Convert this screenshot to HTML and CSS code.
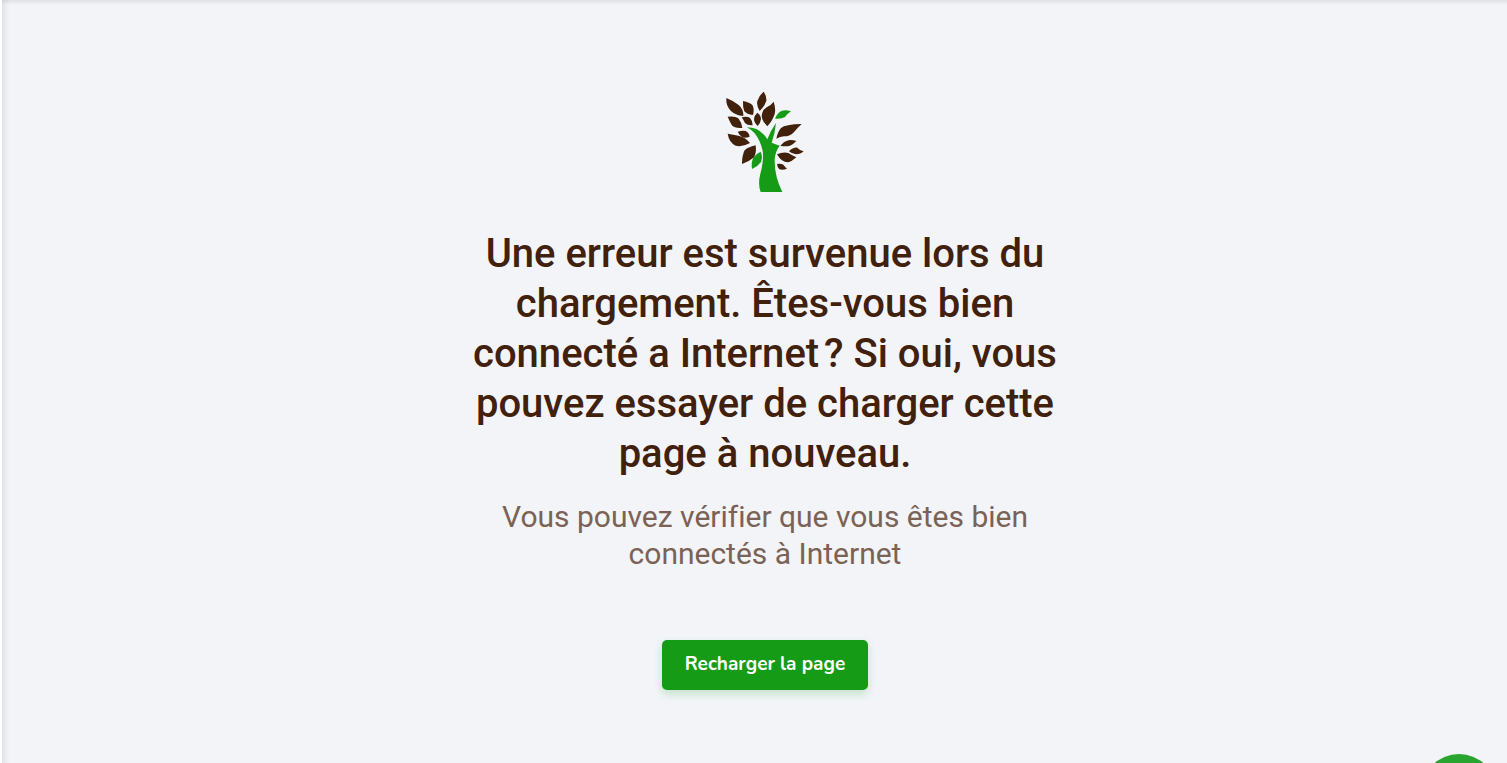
FILE: index.html
```html
<!DOCTYPE html>
<html lang="fr">
<head>
<meta charset="utf-8">
<meta name="viewport" content="width=device-width, initial-scale=1">
<title>Erreur de chargement</title>
<link rel="stylesheet" href="styles.css">
</head>
<body>
<main class="page">
  <section class="error">
    <svg class="logo" viewBox="30 30 240 300" aria-hidden="true">
      <g class="leaf">
        <path d="M34 48Q57 57 71 69Q86 82 85 102Q60 99 47 86Q32 70 34 48Z"/>
        <path d="M84 57Q104 61 112 69Q119 80 114 99Q95 97 88 88Q83 76 84 57Z"/>
        <path d="M146 29Q155 42 154 56Q149 73 134 87Q124 72 127 57Q131 42 146 29Z"/>
        <path d="M176 59Q183 80 179 96Q173 116 157 133Q140 116 140 101Q141 84 155 76Q169 69 176 59Z"/>
        <path d="M38 104Q60 101 70 109Q79 120 82 138Q59 140 51 130Q46 122 38 104Z"/>
        <path d="M80 106Q97 102 105 108Q113 116 113 130Q97 131 90 123Q86 115 80 106Z"/>
        <path d="M127 92Q138 101 138 111Q137 122 128 132Q117 122 117 111Q117 101 127 92Z"/>
        <path d="M260 126Q246 139 238 149Q226 163 207 163Q195 164 184 170Q188 149 198 138Q211 127 260 126Z"/>
        <path d="M68 149Q83 144 92 147Q102 152 104 164Q91 169 82 166Q74 161 68 149Z"/>
        <path d="M38 155Q55 158 70 161Q91 165 105 183Q82 196 62 191Q42 181 38 155Z"/>
        <path d="M122 190Q125 212 117 226Q101 240 81 246Q81 221 88 206Q98 195 122 190Z"/>
        <path d="M244 177Q235 187 225 191Q213 195 196 191Q207 178 220 175Q231 173 244 177Z"/>
        <path d="M222 208Q235 195 247 197Q254 205 266 208Q257 217 243 217Q231 216 222 208Z"/>
        <path d="M186 217Q204 209 220 213Q231 220 244 226Q231 238 220 241Q200 242 186 217Z"/>
        <path d="M186 246Q198 244 205 248Q210 255 216 260Q204 265 193 262Q187 256 186 246Z"/>
      </g>
      <g class="trunk">
        <path d="M228 88Q216 96 210 105Q199 112 180 110Q188 90 201 86Q214 83 228 88Z"/>
        <path d="M137 209Q144 223 138 240Q128 254 111 261Q108 240 115 227Q123 215 137 209Z"/>
        <path d="M96 136Q135 136 157 172Q167 145 183 123Q180 156 170 182Q181 187 194 191Q181 208 179 232Q178 282 202 330H137Q128 307 136 275Q147 235 143 207Q136 175 119 154Q109 143 96 136Z"/>
      </g>
    </svg>
    <h1 class="title">Une erreur est survenue lors du chargement. Êtes-vous bien connecté a Internet&#8239;? Si oui, vous pouvez essayer de charger cette page à nouveau.</h1>
    <p class="subtitle">Vous pouvez vérifier que vous êtes bien connectés à Internet</p>
    <button class="reload" type="button">Recharger la page</button>
  </section>
</main>
<button class="chat" type="button" aria-label="Aide"></button>
</body>
</html>
```
FILE: styles.css
```css
* { box-sizing: border-box; }

body {
  margin: 0;
  background: #fff;
  font-family: Roboto, "Liberation Sans", sans-serif;
  font-variant-ligatures: none;
  overflow: hidden;
}

.page {
  min-height: 100vh;
  margin-left: 2px;
  padding: 92px 24px 72px;
  display: flex;
  justify-content: center;
  align-items: flex-start;
  background:
    linear-gradient(to right, rgba(0, 0, 0, 0.07), rgba(0, 0, 0, 0) 8px),
    linear-gradient(to bottom, rgba(0, 0, 0, 0.08), rgba(0, 0, 0, 0) 5px),
    #f2f4f8;
}

.error {
  width: 100%;
  max-width: 600px;
  margin-left: 21px;
  display: flex;
  flex-direction: column;
  align-items: center;
  text-align: center;
}

.logo { width: 80px; height: 100px; }
.leaf { fill: #41200c; }
.trunk { fill: #169b17; }

.title {
  margin: 37px 0 19px;
  color: #41200c;
  font-size: 40px;
  font-weight: 500;
  line-height: 50px;
}

.subtitle {
  margin: 0 0 68px;
  color: #7b6255;
  font-size: 30px;
  line-height: 37px;
}

.reload {
  height: 50px;
  padding: 0 23px 2px;
  border: 0;
  border-radius: 5px;
  background: #169b17;
  box-shadow: 0 4px 8px rgba(22, 155, 23, 0.2);
  color: #fff;
  font: 700 19px/24px Nunito, "Open Sans", sans-serif;
  cursor: pointer;
}

.chat {
  position: fixed;
  right: 10px;
  bottom: -67px;
  width: 76px;
  height: 76px;
  border: 0;
  border-radius: 50%;
  background: #29a52f;
}
```
